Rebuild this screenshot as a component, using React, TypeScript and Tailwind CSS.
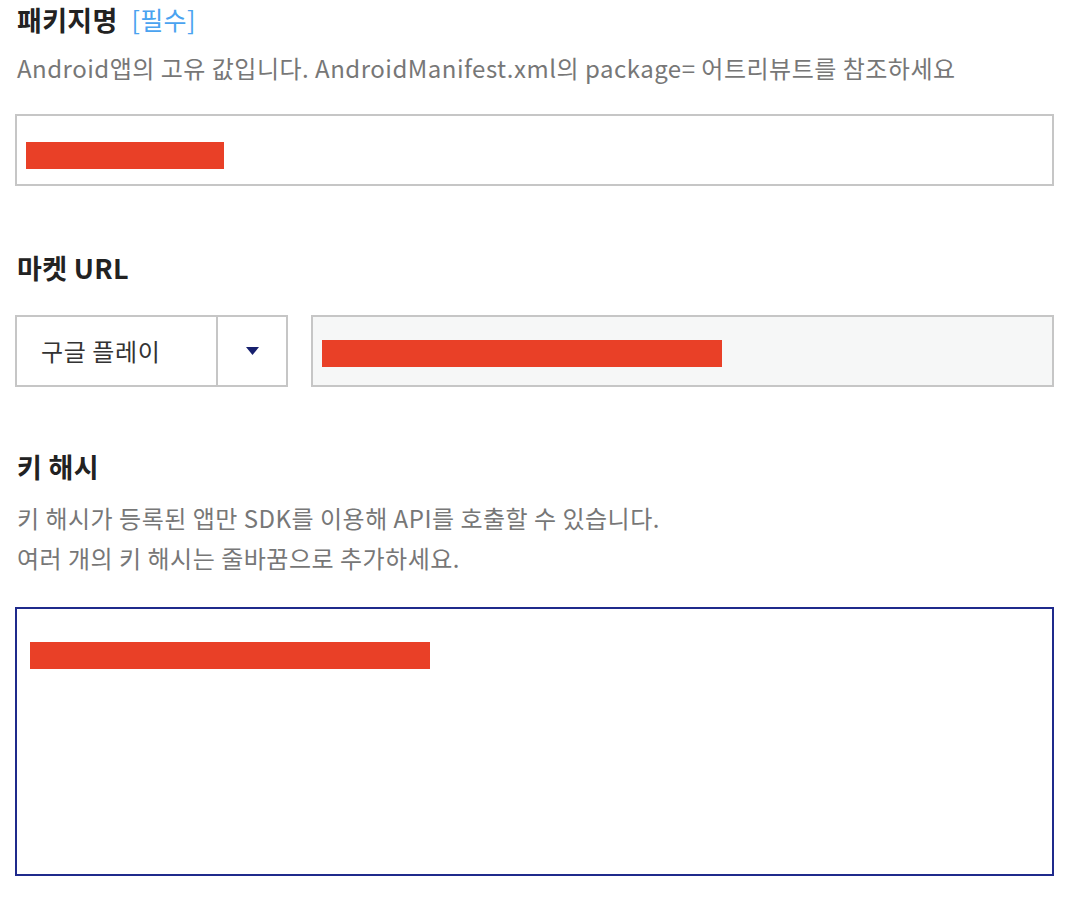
export default function App() {
  const font = { fontFamily: '"Noto Sans CJK KR", "Noto Sans", sans-serif' }

  return (
    <div className="min-h-[902px] w-[1066px] bg-white pl-[15px] pr-[12px]" style={font}>
      <h2 className="flex items-center h-[40px] pl-[2px] text-[27px] font-bold text-[#222] tracking-[0.3px]">
        패키지명
        <span className="ml-[14px] text-[25px] font-normal text-[#4aa3f0]">[필수]</span>
      </h2>
      <p className="mt-[8px] h-[40px] leading-[40px] pl-[2px] text-[24px] text-[#777] tracking-[0.5px] whitespace-nowrap">
        Android앱의 고유 값입니다. AndroidManifest.xml의 package= 어트리뷰트를 참조하세요
      </p>
      <div className="mt-[26px] h-[72px] border-2 border-[#c6c6c6] pt-[26px] pl-[9px]">
        <div className="h-[27px] w-[198px] bg-[#e94027]" />
      </div>

      <h2 className="mt-[62px] h-[40px] leading-[40px] pl-[2px] text-[27px] font-bold text-[#222] tracking-[0.3px]">
        마켓 URL
      </h2>
      <div className="mt-[27px] flex items-stretch gap-[23px] h-[72px]">
        <div className="w-[273px] border-2 border-[#c6c6c6] flex">
          <div className="w-[201px] border-r-2 border-[#c6c6c6] flex items-center pl-[24px] text-[24px] text-[#333] tracking-[0.6px]">
            구글 플레이
          </div>
          <div className="flex-1 flex items-center justify-center">
            <svg width="13" height="8" viewBox="0 0 13 8">
              <polygon points="0,0 13,0 6.5,8" fill="#17206e" />
            </svg>
          </div>
        </div>
        <div className="flex-1 border-2 border-[#c6c6c6] bg-[#f6f7f7] pt-[23px] pl-[9px]">
          <div className="h-[27px] w-[400px] bg-[#e94027]" />
        </div>
      </div>

      <h2 className="mt-[60px] h-[40px] leading-[40px] pl-[2px] text-[27px] font-bold text-[#222] tracking-[0.3px]">
        키 해시
      </h2>
      <div className="mt-[11px] pl-[2px] text-[24px] text-[#777] leading-[40px] tracking-[0.5px]">
        <p>키 해시가 등록된 앱만 SDK를 이용해 API를 호출할 수 있습니다.</p>
        <p>여러 개의 키 해시는 줄바꿈으로 추가하세요.</p>
      </div>
      <div className="mt-[29px] h-[269px] border-2 border-[#1f2a8c] pt-[33px] pl-[13px]">
        <div className="h-[27px] w-[400px] bg-[#e94027]" />
      </div>
    </div>
  )
}
